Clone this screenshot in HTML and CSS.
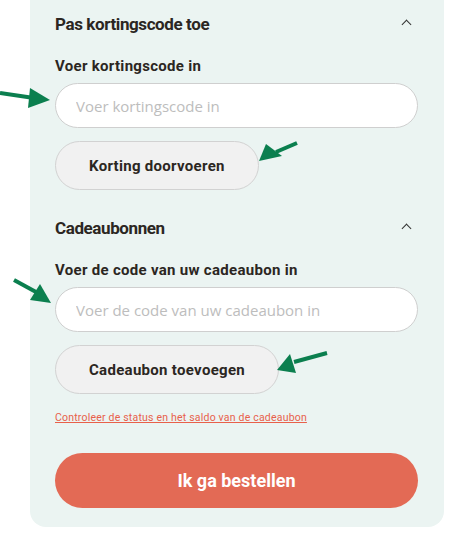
FILE: index.html
```html
<!DOCTYPE html>
<html lang="nl">
<head>
    <meta charset="UTF-8">
    <meta name="viewport" content="width=device-width, initial-scale=1.0">
    <title>Winkelwagen</title>
    <link rel="stylesheet" href="styles.css">
</head>
<body>

    <div class="page">
        <div class="summary-panel">

            <div class="section">
                <div class="section-head">
                    <h2>Pas kortingscode toe</h2>
                    <span class="chevron"></span>
                </div>
                <label class="field-label" for="discount">Voer kortingscode in</label>
                <input class="pill-input" id="discount" type="text" placeholder="Voer kortingscode in">
                <button class="pill-btn">Korting doorvoeren</button>
            </div>

            <div class="section">
                <div class="section-head">
                    <h2>Cadeaubonnen</h2>
                    <span class="chevron"></span>
                </div>
                <label class="field-label" for="giftcard">Voer de code van uw cadeaubon in</label>
                <input class="pill-input" id="giftcard" type="text" placeholder="Voer de code van uw cadeaubon in">
                <button class="pill-btn">Cadeaubon toevoegen</button>
                <a class="status-link" href="#">Controleer de status en het saldo van de cadeaubon</a>
            </div>

            <button class="order-btn">Ik ga bestellen</button>
        </div>

        <!-- annotation arrows -->
        <svg class="arrows" width="449" height="537" viewBox="0 0 449 537">
            <g fill="#0b7f4f" stroke="#0b7f4f">
                <line x1="0" y1="93" x2="34" y2="98" stroke-width="4"/>
                <polygon points="50,100 30,88 28,108" stroke="none"/>

                <line x1="297" y1="143" x2="276" y2="152" stroke-width="4"/>
                <polygon points="259,161 266,144 282,156" stroke="none"/>

                <line x1="14" y1="280" x2="36" y2="292" stroke-width="4"/>
                <polygon points="51,303 30,300 40,284" stroke="none"/>

                <line x1="327" y1="353" x2="294" y2="362" stroke-width="4"/>
                <polygon points="277,370 290,354 296,373" stroke="none"/>
            </g>
        </svg>
    </div>

</body>
</html>
```

FILE: styles.css
```css
    body {
        margin: 0;
        background: #fff;
        font-family: Roboto, "Liberation Sans", sans-serif;
        color: #2b2622;
    }
    .page {
        position: relative;
        width: 449px;
        height: 537px;
        overflow: hidden;
    }
    .summary-panel {
        margin-left: 30px;
        width: 414px;
        box-sizing: border-box;
        padding: 12px 26px 19px 25px;
        background-color: #ebf4f2;
        border-radius: 0 0 16px 16px;
    }

    .section {
        display: flex;
        flex-direction: column;
        align-items: flex-start;
    }
    .section + .section {
        margin-top: 26px;
    }
    .section-head {
        display: flex;
        justify-content: space-between;
        align-items: center;
        width: 100%;
        height: 24px;
    }
    .section-head h2 {
        margin: 0;
        font-size: 17px;
        font-weight: bold;
        letter-spacing: -0.4px;
    }
    .chevron {
        width: 6px;
        height: 6px;
        margin-right: 8px;
        margin-top: 0;
        border-left: 1.3px solid #333;
        border-top: 1.3px solid #333;
        transform: rotate(45deg);
    }

    .field-label {
        margin-top: 21px;
        font-size: 15px;
        font-weight: bold;
        line-height: 19px;
        letter-spacing: 0.3px;
    }
    .pill-input {
        margin-top: 7px;
        width: 100%;
        height: 45px;
        box-sizing: border-box;
        padding: 0 20px;
        border: 1px solid #cfcfcf;
        border-radius: 23px;
        background: #fff;
        font-family: "Open Sans", sans-serif;
        font-size: 15px;
        color: #333;
        outline: none;
    }
    .pill-input::placeholder {
        color: #bdbdbd;
    }
    .pill-btn {
        margin-top: 13px;
        height: 49px;
        padding: 0 33px;
        border: 1px solid #d2d2d2;
        border-radius: 25px;
        background: #f1f1f1;
        font-family: inherit;
        font-size: 15px;
        font-weight: bold;
        color: #2b2622;
        letter-spacing: 0.3px;
    }

    .status-link {
        margin-top: 17px;
        font-size: 10.5px;
        line-height: 13px;
        color: #e8604b;
        letter-spacing: 0.2px;
        text-decoration: underline;
    }

    .order-btn {
        display: block;
        margin-top: 29px;
        width: 100%;
        height: 55px;
        border: none;
        border-radius: 28px;
        background-color: #e36a55;
        color: #fff;
        font-family: inherit;
        font-size: 18px;
        font-weight: bold;
    }

    .arrows {
        position: absolute;
        top: 0;
        left: 0;
        pointer-events: none;
    }
```
